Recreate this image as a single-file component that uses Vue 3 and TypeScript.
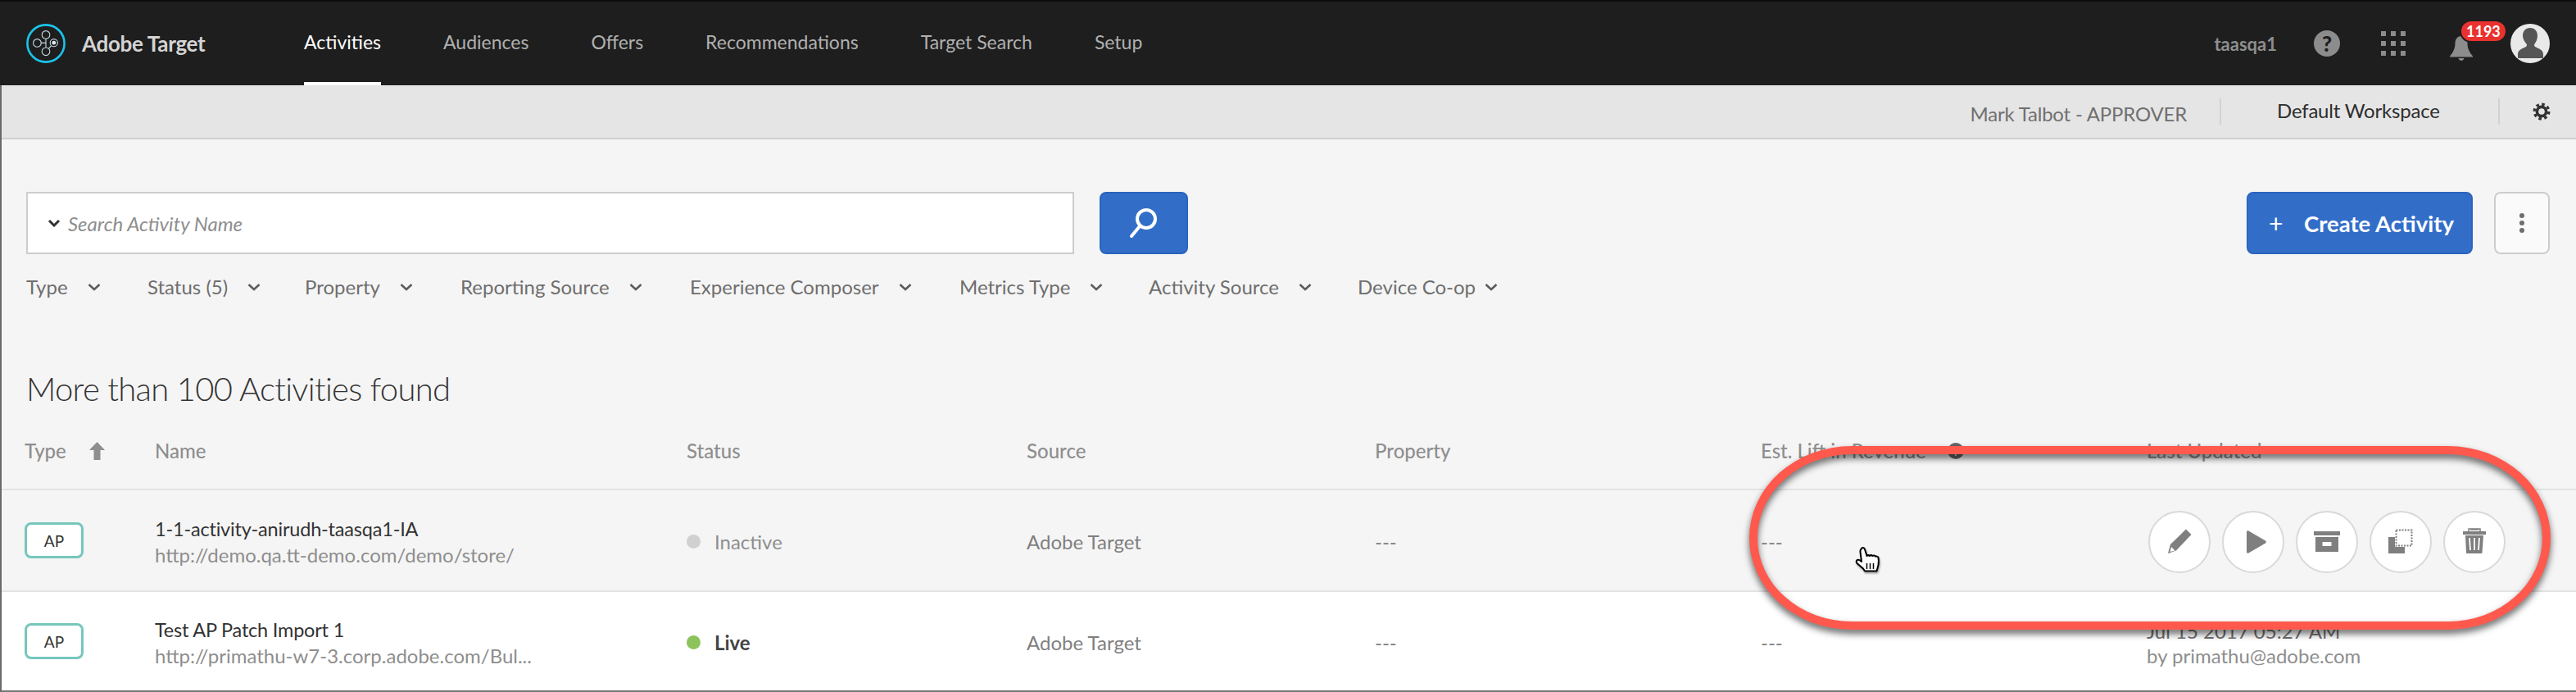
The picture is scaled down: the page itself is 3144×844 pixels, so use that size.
<template>
  <div class="page">
    <header class="topbar">
      <div class="brand">
        <svg class="brand__logo" width="48" height="48" viewBox="0 0 48 48" fill="none">
          <circle cx="24" cy="24" r="22.6" stroke="#1cc3ea" stroke-width="2.6" />
          <g stroke="#c6dce6" stroke-width="1.1">
            <circle cx="24" cy="13.4" r="4.8" />
            <circle cx="13.4" cy="23.4" r="4.8" />
            <circle cx="24" cy="33.8" r="4.8" />
            <circle cx="33.8" cy="23.2" r="4.6" />
            <path d="M24 18.2v10.8M18.2 23.4H24M27.4 30.4l3-3.6" />
          </g>
          <circle cx="33.8" cy="23.2" r="2.4" fill="#dbe9ef" />
        </svg>
        <span class="brand__name">Adobe Target</span>
      </div>
      <nav class="nav">
        <a v-for="item in navItems" :key="item" class="nav__item" :class="{ 'nav__item--active': item === 'Activities' }">{{ item }}</a>
      </nav>
      <div class="topbar__right">
        <span class="tenant">taasqa1</span>
        <span class="help">?</span>
        <span class="apps"><i v-for="n in 9" :key="n"></i></span>
        <span class="bell">
          <svg width="28" height="30" viewBox="0 0 28 30" fill="#8c8c8c">
            <path d="M14 0c5 0 7.500 4 7.500 9 0 6 2.500 11 6.500 15.500v1H0v-1C4 20 6.500 15 6.500 9 6.500 4 9 0 14 0z" />
            <path d="M10.500 27h7c-.7 2-2 3-3.500 3s-2.800-1-3.500-3z" />
          </svg>
          <b class="bell__count">1193</b>
        </span>
        <svg class="avatar" width="48" height="48" viewBox="0 0 48 48">
          <circle cx="24" cy="24" r="24" fill="#e9e9e9" />
          <path d="M24 5c5.500 0 9 4 9 9.500 0 4.500-2 8-3.500 10-.8 1.200-.6 3 1 3.800 4 1.800 9.500 3.700 9.500 8.700v4c0 .6-.5 1-1 1H10c-.5 0-1-.4-1-1v-4c0-5 5.500-6.900 9.500-8.700 1.600-.8 1.800-2.600 1-3.800C18 22.500 15 19 15 14.500 15 9 18.500 5 24 5z" fill="#555" />
        </svg>
      </div>
    </header>

    <div class="content">
      <div class="subbar">
        <span class="subbar__user">Mark Talbot - APPROVER</span>
        <span class="subbar__workspace">Default Workspace</span>
        <span class="subbar__gear">
          <svg width="22" height="22" viewBox="0 0 22 22" fill="none" stroke="#333">
            <circle cx="11" cy="11" r="5.600" stroke-width="3.600" />
            <circle cx="11" cy="11" r="8.800" stroke-width="3.400" stroke-dasharray="3.500 3.410" />
          </svg>
        </span>
      </div>

      <section class="toolbar">
        <div class="search">
          <div class="search__field">
            <svg class="chev chev--dark" width="16" height="10" viewBox="0 0 16 10" fill="none"><path d="M2 2l6 6 6-6" /></svg>
            <span class="search__hint">Search Activity Name</span>
          </div>
          <button class="search__btn">
            <svg width="36" height="40" viewBox="0 0 36 40" fill="none" stroke="#fff" stroke-linecap="round">
              <circle cx="21" cy="15" r="11" stroke-width="4" />
              <path d="M13 24L3 36" stroke-width="4" />
            </svg>
          </button>
        </div>
        <div class="toolbar__actions">
          <button class="create"><span class="create__plus">+</span>Create Activity</button>
          <button class="more"><i></i><i></i><i></i></button>
        </div>
      </section>

      <div class="filters">
        <span v-for="f in filters" :key="f.label" class="filter" :style="{ width: f.width + 'px' }">
          {{ f.label }}
          <svg class="chev" width="16" height="10" viewBox="0 0 16 10" fill="none"><path d="M1.500 2l6.500 6 6.500-6" /></svg>
        </span>
      </div>

      <h1 class="title">More than 100 Activities found</h1>

      <div class="table">
        <div class="row row--head">
          <div class="cell cell--type">
            Type
            <svg width="19" height="22" viewBox="0 0 19 22" fill="#8e8e8e"><path d="M9.500 0L19 10h-5.500v12h-8V10H0z" /></svg>
          </div>
          <div>Name</div>
          <div>Status</div>
          <div>Source</div>
          <div>Property</div>
          <div class="cell cell--lift">Est. Lift in Revenue <span class="info">i</span></div>
          <div>Last Updated</div>
        </div>

        <div v-for="row in rows" :key="row.name" class="row" :class="{ 'row--hover': row.hover }">
          <div><span class="badge">AP</span></div>
          <div class="names">
            <div class="names__title">{{ row.name }}</div>
            <div class="names__url">{{ row.url }}</div>
          </div>
          <div class="state" :class="{ 'state--live': row.status === 'Live' }"><i></i>{{ row.status }}</div>
          <div class="muted">Adobe Target</div>
          <div class="muted">---</div>
          <div class="muted">---</div>
          <div v-if="row.hover" class="actions">
            <span class="action">
              <svg viewBox="0 0 72 72" width="72" height="72"><path d="M22 50l3-11 19-18.500 6.500 6.500L32 46.500z" /><path d="M24.500 48l1.500-6 4.500 4.500z" fill="#fff" /></svg>
            </span>
            <span class="action">
              <svg viewBox="0 0 72 72" width="72" height="72"><path d="M28 24c0-1.500 1-2 2.400-1.400L51 34.500c1.200.7 1.200 2.200 0 2.900L30.400 49.400C29 50 28 49.500 28 48z" /></svg>
            </span>
            <span class="action">
              <svg viewBox="0 0 72 72" width="72" height="72"><path d="M20 23h32v5H20z" /><path d="M22 30h28v18H22z" /><path d="M30.500 36h11v5h-11z" fill="#fff" /></svg>
            </span>
            <span class="action">
              <svg viewBox="0 0 72 72" width="72" height="72">
                <path d="M21 30h8v12h12v8H21z" />
                <rect x="30.500" y="21.500" width="19" height="19" fill="none" stroke="#7f7f7f" stroke-width="2" stroke-dasharray="2 1.500" />
              </svg>
            </span>
            <span class="action">
              <svg viewBox="0 0 72 72" width="72" height="72">
                <path d="M29 23v-3h14v3M31 21h10" fill="none" stroke="#7f7f7f" stroke-width="1.500" />
                <path d="M22 23h28v4H22z" />
                <path d="M25 28h22l-1.500 21c0 .6-.5 1-1 1h-17.500c-.5 0-1-.4-1-1z" />
                <path d="M30 31l1 15M36 31v15M42 31l-1 15" stroke="#fff" stroke-width="1.800" />
              </svg>
            </span>
          </div>
          <div v-else class="updated">
            <div class="updated__date">{{ row.date }}</div>
            <div class="updated__by">{{ row.by }}</div>
          </div>
        </div>
      </div>
    </div>

    <!-- annotation drawn over the screenshot -->
    <div class="callout"></div>
    <svg class="pointer" width="32" height="36" viewBox="0 0 32 36">
      <path d="M8 2c1.500-1.500 3.500-1 4 1l2.500 8c1-1 2.500-1 3.500 0 1-1 2.500-1 3.500 0 1.200-1 3-.8 3.500.7 1-.5 3-.2 3.500 1.300.6 4 .5 9-1 13l-1 3.500H12l-2-3L2.500 20c-1.500-1.800-.8-4 1-4.300 1.500-.3 3 .5 4.500 2.300L6.500 6C6.300 4.500 7 3 8 2z" fill="#fff" stroke="#000" stroke-width="2" stroke-linejoin="round" />
      <path d="M14.500 20v7M18.500 20v7M22.500 20v7" stroke="#000" stroke-width="1.500" fill="none" />
    </svg>
  </div>
</template>

<script setup lang="ts">
interface ActivityRow {
  name: string
  url: string
  status: string
  hover?: boolean
  date?: string
  by?: string
}

const navItems = ['Activities', 'Audiences', 'Offers', 'Recommendations', 'Target Search', 'Setup']

const filters = [
  { label: 'Type', width: 148 },
  { label: 'Status (5)', width: 192 },
  { label: 'Property', width: 190 },
  { label: 'Reporting Source', width: 280 },
  { label: 'Experience Composer', width: 329 },
  { label: 'Metrics Type', width: 231 },
  { label: 'Activity Source', width: 255 },
  { label: 'Device Co-op', width: 170 },
]

const rows: ActivityRow[] = [
  {
    name: '1-1-activity-anirudh-taasqa1-IA',
    url: 'http://demo.qa.tt-demo.com/demo/store/',
    status: 'Inactive',
    hover: true,
  },
  {
    name: 'Test AP Patch Import 1',
    url: 'http://primathu-w7-3.corp.adobe.com/Bul...',
    status: 'Live',
    date: 'Jul 15 2017 05:27 AM',
    by: 'by primathu@adobe.com',
  },
]
</script>

<style>
body {
  background: #fff;
}
</style>

<style scoped>
.page {
  position: relative;
  width: 3144px;
  height: 844px;
  overflow: hidden;
  font-family: Lato, "Open Sans", sans-serif;
  font-size: 24px;
  color: #6e6e6e;
}

.topbar {
  display: flex;
  align-items: center;
  height: 104px;
  box-sizing: border-box;
  border-top: 2px solid #0c0c0c;
  background: #1e1e1e;
}
.brand {
  display: flex;
  align-items: center;
  gap: 20px;
  width: 371px;
  padding-left: 32px;
  box-sizing: border-box;
}
.brand__name {
  font-size: 26px;
  font-weight: 700;
  letter-spacing: -0.3px;
  color: #d4d4d4;
}
.nav {
  display: flex;
  gap: 76px;
  align-self: stretch;
}
.nav__item {
  display: flex;
  align-items: center;
  box-sizing: border-box;
  height: 102px;
  border-bottom: 4px solid transparent;
  font-size: 23px;
  color: #b0b0b0;
}
.nav__item--active {
  color: #fff;
  border-bottom-color: #fff;
}
.topbar__right {
  display: flex;
  align-items: center;
  margin-left: auto;
  padding-right: 32px;
}
.tenant {
  font-size: 22px;
  font-weight: 700;
  color: #8e8e8e;
  margin-right: 45px;
}
.help {
  width: 32px;
  height: 32px;
  border-radius: 50%;
  background: #8c8c8c;
  color: #1e1e1e;
  font-size: 26px;
  font-weight: 900;
  line-height: 32px;
  text-align: center;
  margin-right: 50px;
}
.apps {
  display: grid;
  grid-template-columns: repeat(3, 6px);
  gap: 6px;
  margin-right: 54px;
}
.apps i {
  width: 6px;
  height: 6px;
  background: #8c8c8c;
}
.bell {
  position: relative;
  display: flex;
  width: 28px;
  margin-right: 46px;
  margin-top: 12px;
}
.bell__count {
  position: absolute;
  top: -18px;
  left: 14px;
  padding: 0 6px;
  height: 24px;
  line-height: 24px;
  border-radius: 12px;
  background: #e9322f;
  color: #fff;
  font-size: 18px;
  font-weight: 700;
  box-shadow: 0 0 0 2px #1e1e1e;
}

.content {
  height: 740px;
  box-sizing: border-box;
  border-left: 2px solid #6a6a6a;
  border-bottom: 2px solid #777;
  background: #f5f5f5;
}
.subbar {
  display: flex;
  align-items: center;
  height: 66px;
  box-sizing: border-box;
  border-bottom: 2px solid #d0d0d0;
  background: #e5e5e5;
}
.subbar__user {
  margin-left: auto;
  padding-right: 40px;
  font-size: 24px;
  letter-spacing: -0.2px;
  color: #707070;
  position: relative;
  top: 2px;
}
.subbar__workspace {
  display: flex;
  align-items: center;
  height: 32px;
  padding: 0 0 4px 68px;
  box-sizing: border-box;
  width: 342px;
  border-left: 2px solid #d2d2d2;
  border-right: 2px solid #d2d2d2;
  font-size: 24px;
  letter-spacing: -0.2px;
  white-space: nowrap;
  color: #2e2e2e;
}
.subbar__gear {
  display: flex;
  width: 93px;
  padding-left: 40px;
  box-sizing: border-box;
}

.toolbar {
  display: flex;
  justify-content: space-between;
  padding: 64px 32px 0 30px;
}
.search {
  display: flex;
  gap: 31px;
}
.search__field {
  display: flex;
  align-items: center;
  gap: 9px;
  width: 1279px;
  height: 76px;
  padding-left: 24px;
  box-sizing: border-box;
  border: 2px solid #cdcdcd;
  background: #fff;
}
.search__hint {
  font-size: 24px;
  font-style: italic;
  color: #8e8e8e;
}
.search__btn {
  display: flex;
  align-items: center;
  justify-content: center;
  width: 108px;
  height: 76px;
  padding: 0;
  border: 2px solid #2a64bd;
  border-radius: 8px;
  background: #326ec8;
}
.toolbar__actions {
  display: flex;
  gap: 26px;
}
.create {
  display: flex;
  align-items: center;
  width: 276px;
  height: 76px;
  padding: 0 0 0 25px;
  box-sizing: border-box;
  border: 2px solid #2a64bd;
  border-radius: 8px;
  background: #326ec8;
  color: #fff;
  font-family: inherit;
  font-size: 27.500px;
  font-weight: 700;
}
.create__plus {
  width: 43px;
  font-size: 30px;
  font-weight: 400;
  text-align: left;
}
.more {
  display: flex;
  flex-direction: column;
  align-items: center;
  justify-content: center;
  gap: 3px;
  width: 68px;
  height: 76px;
  padding: 0;
  box-sizing: border-box;
  border: 2px solid #cdcdcd;
  border-radius: 8px;
  background: #fafafa;
}
.more i {
  width: 6px;
  height: 6px;
  border-radius: 50%;
  background: #6e6e6e;
}

.filters {
  display: flex;
  padding: 24px 0 0 30px;
}
.filter {
  display: flex;
  align-items: center;
  gap: 24px;
  flex: none;
  font-size: 24px;
  line-height: 32px;
  white-space: nowrap;
}
.filter:last-child {
  gap: 11px;
}
.chev {
  flex: none;
  stroke: #5c5c5c;
  stroke-width: 2.600;
}
.chev--dark {
  stroke: #333;
  stroke-width: 3;
}

.title {
  margin: 83px 0 0 30px;
  font-size: 40px;
  line-height: 50px;
  letter-spacing: -0.7px;
  font-weight: 300;
  color: #333;
}

.table {
  margin-top: 35px;
}
.row {
  display: grid;
  grid-template-columns: 159px 649px 415px 425px 471px 471px 1fr;
  align-items: center;
  padding-left: 28px;
  height: 120px;
  box-sizing: border-box;
  background: #fff;
}
.row--head {
  height: 64px;
  align-items: start;
  border-bottom: 2px solid #e3e3e3;
  background: transparent;
  font-size: 24px;
  font-weight: 500;
  line-height: 32px;
  color: #8e8e8e;
}
.row--hover {
  height: 124px;
  border-bottom: 2px solid #e3e3e3;
  background: #f5f5f5;
}
.cell--type {
  display: flex;
  align-items: center;
  gap: 28px;
}
.cell--lift {
  display: flex;
  align-items: center;
  gap: 26px;
}
.info {
  width: 20px;
  height: 20px;
  border-radius: 50%;
  background: #666;
  color: #f5f5f5;
  font-size: 15px;
  line-height: 20px;
  text-align: center;
}
.badge {
  display: flex;
  align-items: center;
  justify-content: center;
  width: 72px;
  height: 44px;
  box-sizing: border-box;
  border: 3px solid #76c7bc;
  border-radius: 8px;
  background: #fff;
  font-size: 19px;
  color: #333;
}
.names {
  margin-top: 4px;
}
.names__title {
  font-size: 23.500px;
  letter-spacing: -0.2px;
  line-height: 32px;
  color: #333;
}
.names__url {
  font-size: 24px;
  line-height: 32px;
  color: #8e8e8e;
}
.state {
  display: flex;
  align-items: center;
  gap: 17px;
  margin-top: 3px;
  color: #8e8e8e;
}
.state i {
  width: 17px;
  height: 17px;
  border-radius: 50%;
  background: #d0d0d0;
}
.state--live {
  font-weight: 700;
  color: #444;
}
.state--live i {
  background: #8dc35b;
}
.muted {
  margin-top: 3px;
  color: #7f7f7f;
}
.actions {
  display: flex;
  gap: 14px;
  margin-left: 2px;
  margin-top: 3px;
}
.action {
  display: flex;
  width: 76px;
  height: 76px;
  box-sizing: border-box;
  border: 2px solid #d9d9d9;
  border-radius: 50%;
  background: #fff;
}
.action svg {
  fill: #7f7f7f;
}
.updated {
  line-height: 30px;
  margin-top: 6px;
}
.updated__date {
  color: #6e6e6e;
}
.updated__by {
  color: #8e8e8e;
}

.callout {
  position: absolute;
  left: 2135px;
  top: 544px;
  width: 978px;
  height: 224px;
  box-sizing: border-box;
  border: 10px solid #ff594e;
  border-radius: 125px / 112px;
  filter: drop-shadow(0 5px 4px rgba(0, 0, 0, 0.6));
}
.pointer {
  position: absolute;
  left: 2264px;
  top: 667px;
  filter: drop-shadow(1px 2px 1px rgba(0, 0, 0, 0.35));
}
</style>
